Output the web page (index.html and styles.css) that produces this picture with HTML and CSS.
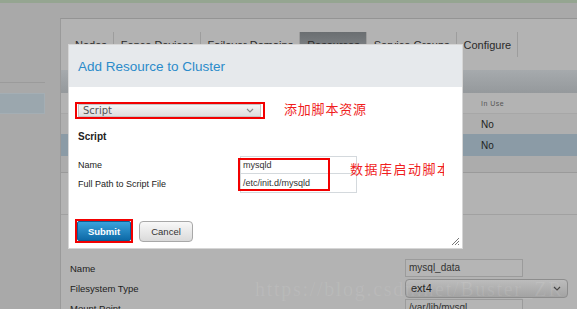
FILE: index.html
```html
<!DOCTYPE html>
<html lang="en">
<head>
    <meta charset="UTF-8">
    <meta name="viewport" content="width=device-width, initial-scale=1.0">
    <title>Add Resource to Cluster</title>
    <link rel="stylesheet" href="styles.css">
</head>
<body>
    <div class="topbar"></div>
    <div class="layout">
        <aside class="sidebar">
            <div class="side-rule"></div>
            <div class="side-item"></div>
        </aside>

        <main class="panel">
            <nav class="tabs">
                <span class="tab">Nodes</span>
                <span class="tab">Fence Devices</span>
                <span class="tab">Failover Domains</span>
                <span class="tab active">Resources</span>
                <span class="tab">Service Groups</span>
                <span class="tab">Configure</span>
            </nav>

            <div class="grid-head"></div>
            <div class="grid-row grid-title"><span>In Use</span></div>
            <div class="grid-row"><span>No</span></div>
            <div class="grid-row selected"><span>No</span></div>
            <div class="grid-foot"></div>
            <div class="split"></div>

            <div class="detail">
                <span class="detail-label">Name</span>
                <span class="detail-input">mysql_data</span>
                <span class="detail-label">Filesystem Type</span>
                <span class="detail-select">ext4
                    <svg width="8" height="5" viewBox="0 0 8 5"><path d="M1 1 L4 4 L7 1" stroke="#444" stroke-width="1.2" fill="none"/></svg>
                </span>
                <span class="detail-label">Mount Point</span>
                <span class="detail-input">/var/lib/mysql</span>
            </div>
        </main>
    </div>

    <div class="watermark">https://blog.csdn.net/Buster_ZR</div>

    <!-- The Modal -->
    <div class="modal">
        <div class="modal-header">Add Resource to Cluster</div>
        <div class="modal-body">
            <div class="mark-box select-mark">
                <div class="select">Script
                    <svg width="8" height="5" viewBox="0 0 8 5"><path d="M1 1 L4 4 L7 1" stroke="#888" stroke-width="1.1" fill="none"/></svg>
                </div>
            </div>
            <div class="section">Script</div>
            <div class="fields">
                <span class="field-label">Name</span>
                <span class="field-input first">mysqld</span>
                <span class="field-label">Full Path to Script File</span>
                <span class="field-input">/etc/init.d/mysqld</span>
            </div>
            <div class="actions">
                <div class="mark-box submit-mark">
                    <button class="btn btn-primary">Submit</button>
                </div>
                <button class="btn btn-cancel">Cancel</button>
            </div>
        </div>
        <svg class="grip" width="9" height="9" viewBox="0 0 9 9">
            <path d="M1 8 L8 1 M4 8 L8 4 M7 8 L8 7" stroke="#777" stroke-width="1" fill="none"/>
        </svg>
    </div>

    <!-- annotations drawn over the screenshot -->
    <div class="fields-mark"></div>
    <div class="note note-select">添加脚本资源</div>
    <div class="note note-fields">数据库启动脚本</div>
</body>
</html>
```

FILE: styles.css
```css
body {
    font-family: "Liberation Sans", Arial, sans-serif;
    margin: 0;
    padding: 0;
    width: 577px;
    height: 309px;
    overflow: hidden;
    position: relative;
    background-color: #a9a9a9;
    color: #222;
}
.topbar {
    height: 3px;
    background-color: #95a591;
}
.layout {
    display: flex;
}

/* left navigation */
.sidebar {
    width: 60px;
    flex-shrink: 0;
}
.side-rule {
    margin-top: 79px;
    width: 45px;
    height: 1px;
    background-color: #9b9b9b;
}
.side-item {
    margin-top: 10px;
    width: 44px;
    height: 19px;
    background-color: #9ba7ae;
    border: 1px solid #a4aeb4;
    border-left: none;
}

/* main panel */
.panel {
    flex: 1;
    margin-top: 15px;
    height: 300px;
    background-color: #b3b3b3;
    border-top: 1px solid #949494;
    border-left: 1px solid #9a9a9a;
}
.tabs {
    display: flex;
    height: 25px;
    margin-top: 13px;
    padding-left: 7px;
}
.tab {
    display: flex;
    align-items: center;
    padding: 0 6px 0 7px;
    font-size: 11px;
    color: #2a2a2a;
    border-right: 1px solid #9d9d9d;
}
.tab.active {
    background: linear-gradient(#6a6e71, #878b8e);
}
.grid-head {
    margin-top: 13px;
    height: 23px;
    background: linear-gradient(#a6aaad, #95999c);
}
.grid-row {
    height: 20px;
    display: flex;
    align-items: center;
    padding-left: 420px;
    font-size: 10px;
    background-color: #afafaf;
    border-top: 1px solid #a7a7a7;
}
.grid-title {
    height: 20px;
    font-size: 7px;
    letter-spacing: 0.5px;
    color: #555;
    background-color: #b3b3b3;
    border-top: none;
}
.grid-row.selected {
    height: 21px;
    background-color: #8b9ba6;
    border-top: 1px solid #8b9ba6;
}
.grid-foot {
    height: 16px;
    background-color: #acacac;
    border-bottom: 1px solid #9a9a9a;
}
.split {
    margin-top: 41px;
    height: 1px;
    background-color: #a1a1a1;
}
.detail {
    display: grid;
    grid-template-columns: 335px auto;
    grid-auto-rows: 20px;
    align-items: center;
    margin-top: 43px;
    padding-left: 9px;
    font-size: 9.5px;
}
.detail-input {
    box-sizing: border-box;
    width: 118px;
    height: 18px;
    padding-left: 3px;
    line-height: 16px;
    border: 1px solid #9b9b9b;
    background-color: #b5b5b5;
    color: #333;
    font-size: 10px;
}
.detail-select {
    box-sizing: border-box;
    width: 163px;
    height: 19px;
    padding: 0 6px 0 5px;
    font-size: 11px;
    display: flex;
    align-items: center;
    justify-content: space-between;
    border: 1px solid #8d8d8d;
    border-radius: 4px;
    background: linear-gradient(#bcbcbc, #a3a3a3);
}

.watermark {
    position: absolute;
    left: 255px;
    top: 278px;
    font-family: "Liberation Serif", serif;
    font-size: 20px;
    letter-spacing: 1.7px;
    color: rgba(255, 255, 255, 0.09);
    white-space: nowrap;
}

/* dialog */
.modal {
    position: absolute;
    left: 68px;
    top: 44px;
    width: 395px;
    height: 205px;
    box-sizing: border-box;
    background-color: #fff;
    border: 1px solid #d6d6d6;
}
.modal-header {
    height: 42px;
    display: flex;
    align-items: center;
    padding-left: 9px;
    background-color: #e6e9ec;
    color: #2b8bca;
    font-size: 13.5px;
}
.modal-body {
    padding: 15px 9px 0 9px;
}
.mark-box {
    border: 2px solid #f20000;
    width: fit-content;
    margin-left: -3px;
}
.select-mark {
    padding: 0 2px 0 1px;
}
.select {
    box-sizing: border-box;
    width: 183px;
    height: 13px;
    display: flex;
    align-items: center;
    justify-content: space-between;
    padding: 0 6px 0 4px;
    font-family: "DejaVu Sans", sans-serif;
    font-size: 10px;
    color: #555;
    border: 1px solid #c4c4c4;
    background: linear-gradient(#f5f5f5, #dedede);
}
.section {
    margin-top: 11px;
    line-height: 13px;
    font-size: 10px;
    font-weight: bold;
    color: #222;
}
.fields {
    display: grid;
    grid-template-columns: 162px 117px;
    margin-top: 13px;
    font-size: 9px;
}
.field-label {
    display: flex;
    align-items: center;
    color: #222;
}
.field-input {
    box-sizing: border-box;
    height: 19px;
    padding-left: 2px;
    line-height: 18px;
    font-size: 9px;
    color: #333;
    border: 1px solid #d4d9dd;
    border-top: none;
}
.field-input.first {
    height: 18px;
    line-height: 16px;
    border-top: 1px solid #d4d9dd;
}
.actions {
    display: flex;
    align-items: center;
    margin-top: 26px;
}
.btn {
    box-sizing: border-box;
    width: 54px;
    font-family: "Liberation Sans", Arial, sans-serif;
    padding: 0;
    cursor: pointer;
}
.btn-primary {
    display: block;
    height: 20px;
    font-size: 9.5px;
    font-weight: bold;
    color: #fff;
    border: 1px solid #0c5d94;
    border-radius: 2px;
    background: linear-gradient(#3aa2dc, #0e6aa7);
}
.btn-cancel {
    height: 21px;
    margin-left: 6px;
    font-size: 9.5px;
    color: #333;
    border: 1px solid #a8a8a8;
    border-radius: 4px;
    background: linear-gradient(#f8f8f8, #dadada);
}
.grip {
    position: absolute;
    right: 2px;
    bottom: 2px;
}

/* red markings */
.fields-mark {
    position: absolute;
    left: 238px;
    top: 158px;
    width: 92px;
    height: 33px;
    box-sizing: border-box;
    border: 2px solid #f20000;
}
.note {
    position: absolute;
    font-family: "Noto Sans CJK SC", sans-serif;
    font-size: 13px;
    line-height: 16px;
    letter-spacing: 0.8px;
    color: #f01e1e;
    white-space: nowrap;
    overflow: hidden;
}
.note-select {
    left: 284px;
    top: 101px;
}
.note-fields {
    left: 350px;
    top: 161px;
    width: 94px;
    letter-spacing: 1.5px;
}
```
